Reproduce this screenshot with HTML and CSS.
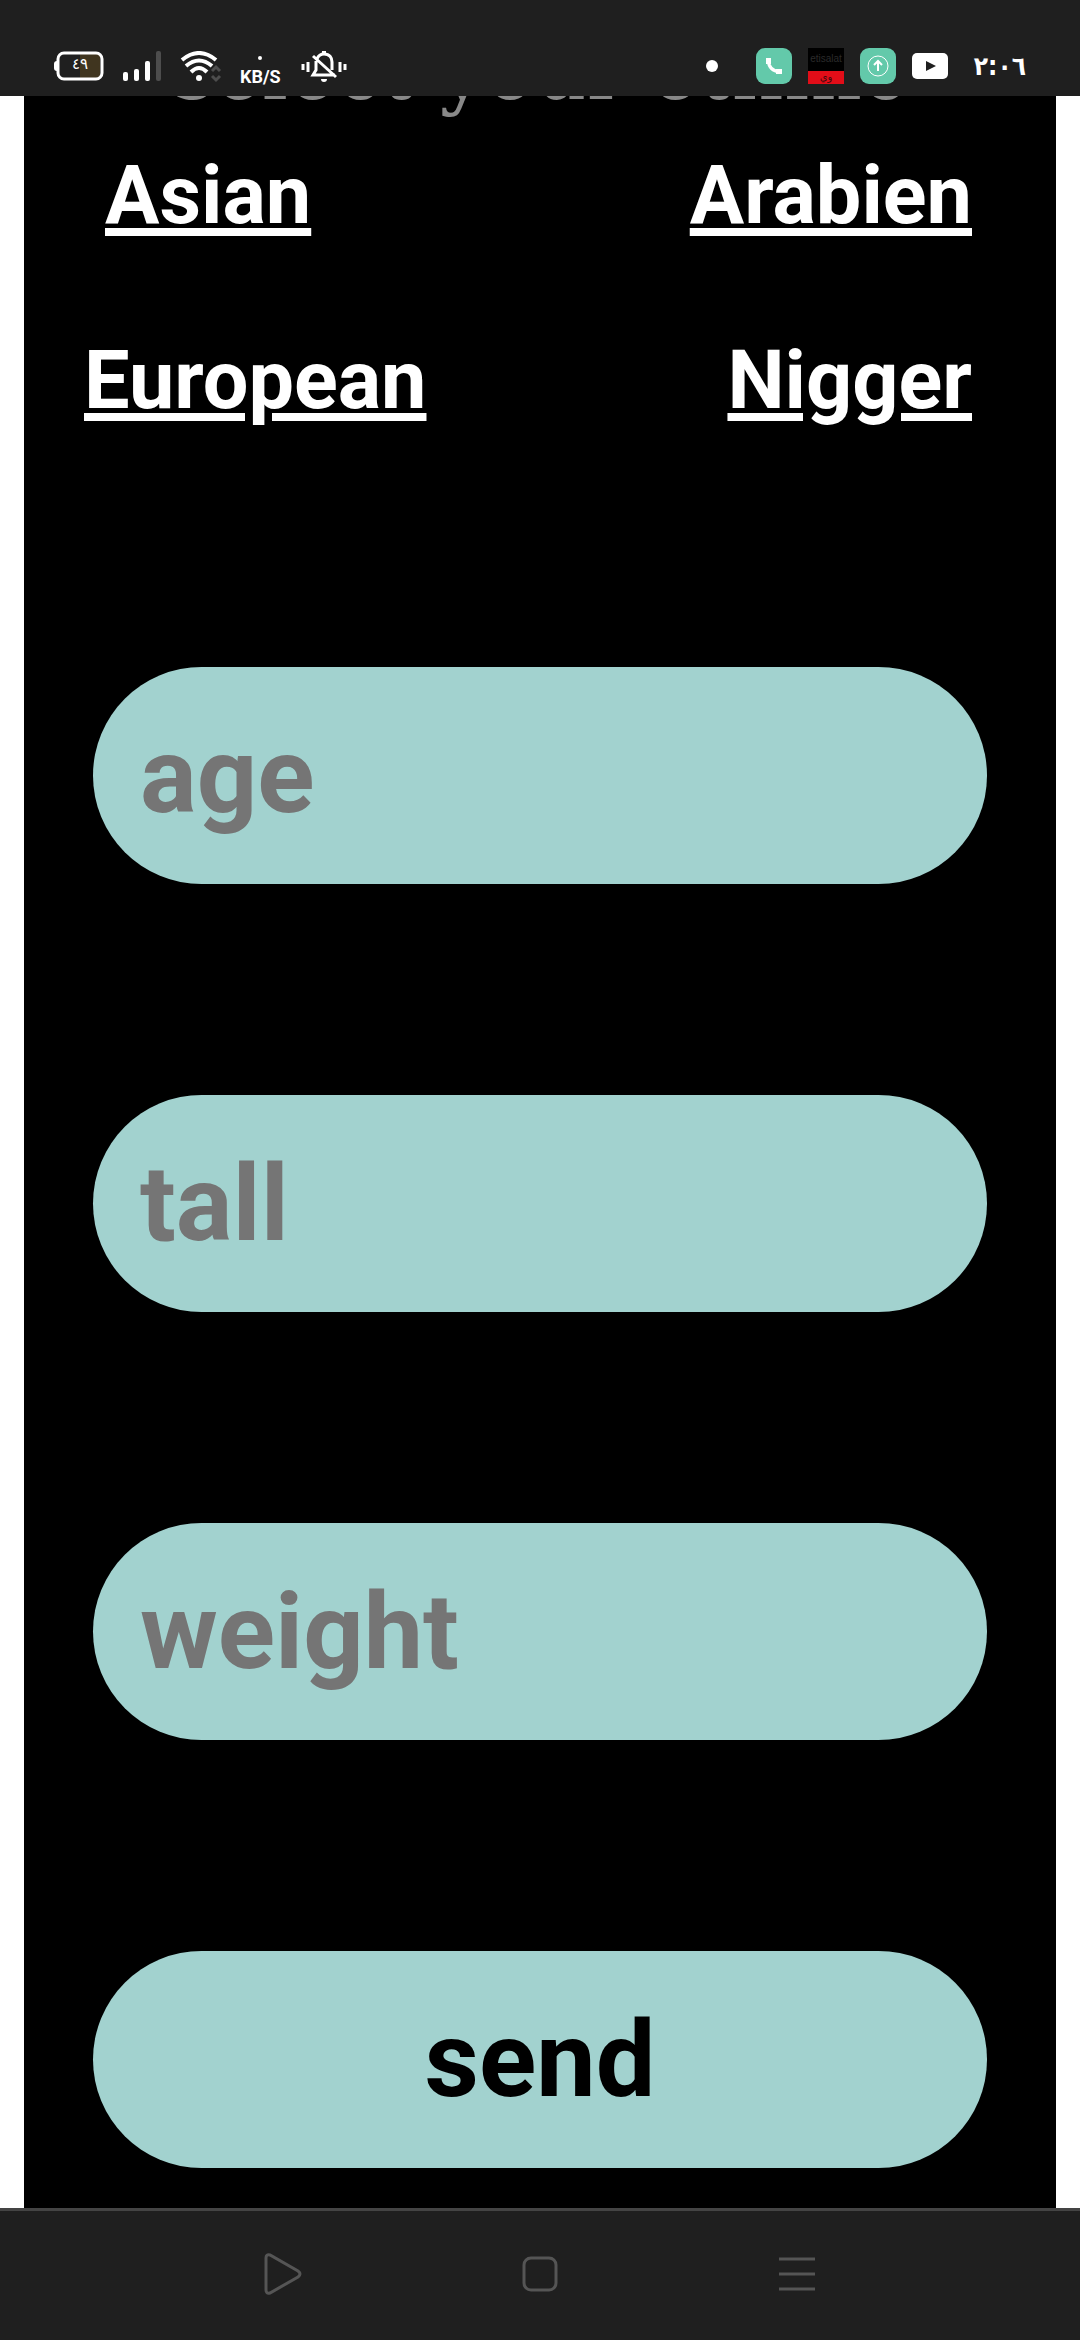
FILE: index.html
```html
<!DOCTYPE html>
<html lang="en">
<head>
<meta charset="utf-8">
<meta name="viewport" content="width=device-width">
<title>Profile form</title>
<link rel="stylesheet" href="styles.css">
</head>
<body>
<header class="status">
  <div class="status-group">
    <svg width="50" height="30" viewBox="0 0 50 30"><rect x="26" y="3" width="20" height="24" fill="#40351f"/><rect x="4" y="2" width="44" height="26" rx="6" fill="none" stroke="#fff" stroke-width="3"/><path d="M3 10v10a3 3 0 0 1-3-3v-4a3 3 0 0 1 3-3z" fill="#fff"/><text x="26" y="18" text-anchor="middle" font-size="15" fill="#fff" class="digits">٤٩</text></svg>
    <svg width="40" height="30" viewBox="0 0 40 30"><g fill="#fff"><rect x="1" y="21" width="5" height="9" rx="2"/><rect x="12" y="18" width="5" height="12" rx="2"/><rect x="23" y="10" width="5" height="20" rx="2"/></g><rect x="34" width="5" height="30" rx="2" fill="#4d4d4d"/></svg>
    <svg width="42" height="32" viewBox="0 0 42 32"><g fill="none" stroke="#fff" stroke-width="4"><path d="M2 9Q19-5 36 9"/><path d="M6 15Q19 4 32 15"/><path d="M11 21Q19 13 27 21"/></g><circle cx="19" cy="27" r="3" fill="#fff"/><path d="M32 20l4-4 4 4M32 25l4 4 4-4" fill="none" stroke="#4d4d4d" stroke-width="3"/></svg>
    <div class="speed"><span class="speed-dot"></span>KB/S</div>
    <svg class="muted" width="46" height="32" viewBox="0 0 46 32"><g fill="none" stroke="#fff" stroke-width="3"><path d="M2 13v6M7 11v10M39 11v10M44 13v6M16 8q2-5 7-5c6 0 8 4 8 8v8M15 10v9l-3 5h22M12 5l23 21"/></g><path d="M20 28h6a3 3 0 0 1-6 0zM21 0h4v3h-4z" fill="#fff"/></svg>
  </div>
  <div class="status-group status-right">
    <span class="dot"></span>
    <svg width="36" height="36" viewBox="0 0 36 36"><rect width="36" height="36" rx="9" fill="#63c9aa"/><path d="M12 12Q13 23 24 24" fill="none" stroke="#fff" stroke-width="3"/><path d="M10 10h5v6h-5zM20 21h6v5h-6z" fill="#fff"/></svg>
    <svg width="36" height="36" viewBox="0 0 36 36"><path d="M0 0h36v23H0z" fill="#000"/><path d="M0 23h36v13H0z" fill="#e20d18"/><text x="18" y="14" text-anchor="middle" font-size="10" fill="#2b2b2b" class="carrier">etisalat</text><text x="18" y="32" text-anchor="middle" font-size="10" fill="#40090c" class="digits">وي</text></svg>
    <svg width="36" height="36" viewBox="0 0 36 36"><rect width="36" height="36" rx="9" fill="#63c9aa"/><circle cx="18" cy="18" r="10" fill="none" stroke="#fff" stroke-width="1"/><path d="M18 23v-9M14 17l4-4 4 4" fill="none" stroke="#fff" stroke-width="2"/></svg>
    <svg width="36" height="36" viewBox="0 0 36 36"><rect y="5" width="36" height="26" rx="5" fill="#fff"/><path d="M14 13l10 5-10 5z" fill="#1f1f1f"/></svg>
    <time class="clock">٢:٠٦</time>
  </div>
</header>
<main class="page">
  <form class="panel">
    <div class="heading-clip"><h1 class="heading">select your ethnic</h1></div>
    <div class="options">
      <a class="option indented" href="#">Asian</a>
      <a class="option end" href="#">Arabien</a>
      <a class="option" href="#">European</a>
      <a class="option end" href="#">Nigger</a>
    </div>
    <div class="fields">
      <input class="pill" type="text" placeholder="age" aria-label="age">
      <input class="pill" type="text" placeholder="tall" aria-label="tall">
      <input class="pill" type="text" placeholder="weight" aria-label="weight">
      <button class="pill send" type="button">send</button>
    </div>
  </form>
</main>
<nav class="navbar">
  <button class="nav-button" type="button" aria-label="Back"><svg width="38" height="42" viewBox="0 0 38 42"><path d="M2 5v32q0 4 4 3l28-16q4-3 0-6L6 2Q2 1 2 5z" fill="none" stroke="#555" stroke-width="3"/></svg></button>
  <button class="nav-button" type="button" aria-label="Home"><svg width="36" height="36" viewBox="0 0 36 36"><rect x="2" y="2" width="32" height="32" rx="7" fill="none" stroke="#555" stroke-width="3"/></svg></button>
  <button class="nav-button" type="button" aria-label="Recent apps"><svg width="36" height="34" viewBox="0 0 36 34"><path d="M0 2h36M0 17h36M0 32h36" stroke="#555" stroke-width="3"/></svg></button>
</nav>
</body>
</html>
```
FILE: styles.css
```css
* { box-sizing: border-box; }
body {
  margin: 0;
  min-height: 100vh;
  display: flex;
  flex-direction: column;
  background: #fff;
  font-family: Roboto, sans-serif;
}
svg { display: block; flex: none; }
.status {
  height: 96px;
  padding: 36px 54px 0;
  display: flex;
  justify-content: space-between;
  background: #1f1f1f;
  color: #fff;
}
.status-group {
  display: flex;
  align-items: flex-start;
  gap: 18px;
  padding-top: 15px;
}
.status-right { gap: 16px; padding-top: 12px; }
.digits { font-family: "DejaVu Sans", sans-serif; }
.carrier { font-family: "Liberation Sans", sans-serif; }
.speed { font-size: 18px; font-weight: 700; line-height: 20px; text-align: center; }
.speed-dot { display: block; width: 4px; height: 4px; margin: 5px auto 7px; border-radius: 50%; background: #fff; }
.muted { margin-left: 2px; }
.dot { width: 12px; height: 12px; margin: 12px 22px 0 0; border-radius: 50%; background: #fff; }
.clock {
  padding-left: 10px;
  font: 700 26px/36px "DejaVu Sans Condensed", "DejaVu Sans", sans-serif;
}
.page { flex: 1; padding: 0 24px; }
.panel { padding-bottom: 40px; background: #000; }
.heading-clip {
  height: 24px;
  overflow: hidden;
  display: flex;
  align-items: flex-end;
  justify-content: center;
}
.heading {
  margin: 0;
  color: #888;
  font: 400 81px/98px "DejaVu Serif", serif;
  white-space: nowrap;
}
.options {
  display: grid;
  grid-template-columns: auto auto;
  justify-content: space-between;
  justify-items: start;
  row-gap: 92px;
  padding: 29px 84px 0 60px;
}
.option {
  color: #fff;
  font-size: 81px;
  font-weight: 700;
  line-height: 93px;
  text-decoration-thickness: 8px;
  text-underline-offset: 5px;
}
.indented { margin-left: 21px; }
.end { justify-self: end; }
.fields { display: grid; gap: 211px; padding: 240px 69px 0; }
.pill {
  width: 100%;
  height: 217px;
  padding: 0 47px;
  border: 0;
  border-radius: 109px;
  background: #a2d2cf;
  color: #000;
  font: 700 106px/124px Roboto, sans-serif;
}
.pill::placeholder { color: #757575; opacity: 1; }
.send { text-align: center; }
.navbar {
  height: 132px;
  padding: 0 154px 3px;
  display: grid;
  grid-template-columns: repeat(3, 1fr);
  align-items: center;
  border-top: 3px solid #444;
  background: #1f1f1f;
}
.nav-button { display: grid; place-items: center; padding: 0; border: 0; background: none; }
```
